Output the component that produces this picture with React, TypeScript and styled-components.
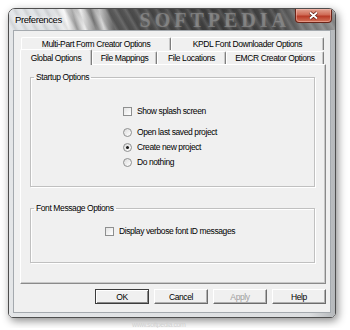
import styled, { createGlobalStyle } from 'styled-components';

const GlobalStyle = createGlobalStyle`
	html, body {
		margin: 0;
		background: #fff;
	}
	body {
		font-family: "Liberation Sans", Arial, sans-serif;
		letter-spacing: -0.4px;
		color: #000;
	}
`;

const Stage = styled.div`
	display: flex;
	flex-direction: column;
	align-items: flex-start;
	padding: 8px 0 0 8px;
`;

const Window = styled.div`
	width: 328px;
	height: 310px;
	box-sizing: border-box;
	display: flex;
	flex-direction: column;
	border: 1px solid #4e4e4e;
	border-radius: 7px 7px 5px 5px;
	overflow: hidden;
	box-shadow: 2px 3px 8px rgba(0, 0, 0, 0.45);
`;

const TitleBar = styled.div`
	height: 21px;
	flex: none;
	display: flex;
	align-items: flex-start;
	padding-left: 6px;
	background:
		repeating-linear-gradient(
			60deg,
			rgba(255, 255, 255, 0) 0px,
			rgba(255, 255, 255, 0.12) 3px,
			rgba(0, 0, 0, 0.08) 6px,
			rgba(255, 255, 255, 0) 9px
		),
		linear-gradient(
			75deg,
			#e3e6e9 0px,
			#dcdfe2 48px,
			#f6f6f6 58px,
			#a4a4a4 66px,
			#eeeeee 74px,
			#7c7c7c 84px,
			#d2d2d2 92px,
			#5a5a5a 102px,
			#4a4a4a 130px,
			#3c3c3c 200px,
			#474747 262px,
			#767676 286px,
			#8e8e8e 318px,
			#9c9c9c 330px
		);
`;

const Title = styled.span`
	font-size: 9.5px;
	line-height: 21px;
	text-shadow: 0 0 5px #fff, 0 0 3px #fff;
`;

const Watermark = styled.span`
	margin-left: auto;
	font-family: "Liberation Serif", serif;
	font-weight: bold;
	font-size: 20px;
	line-height: 22px;
	letter-spacing: 4px;
	color: rgba(150, 150, 150, 0.6);
	text-shadow: 0 0 3px rgba(200, 200, 200, 0.35);
`;

const CloseButton = styled.div`
	width: 37px;
	height: 14px;
	box-sizing: border-box;
	margin: 0 3px 0 5px;
	display: flex;
	align-items: center;
	justify-content: center;
	border: 1px solid #6a2418;
	border-top: none;
	border-radius: 0 0 4px 4px;
	background: linear-gradient(#e2a493 0%, #cf6a55 45%, #b83a26 55%, #d2745a 100%);
	box-shadow: inset 0 0 0 1px rgba(255, 200, 190, 0.45);
`;

const FrameBody = styled.div`
	flex: 1;
	display: flex;
	padding: 0 4px 4px 4px;
	background: linear-gradient(90deg, #e4e6e8 0%, #dcdee0 92%, #b4b7ba 100%);
`;

const Client = styled.div`
	flex: 1;
	display: flex;
	flex-direction: column;
	border: 1px solid #a4a9ae;
	background: #f0f0f0;
	padding: 6px 4px 8px 6px;
`;

const TabRow = styled.div<{ $inset: number; $height: number }>`
	display: flex;
	align-items: flex-end;
	height: ${(p) => p.$height}px;
	margin-left: ${(p) => p.$inset}px;
`;

const Tab = styled.div<{ $w: number; $selected?: boolean }>`
	width: ${(p) => p.$w}px;
	height: ${(p) => (p.$selected ? 16 : 13)}px;
	margin-bottom: ${(p) => (p.$selected ? -1 : 0)}px;
	position: ${(p) => (p.$selected ? 'relative' : 'static')};
	z-index: ${(p) => (p.$selected ? 1 : 0)};
	box-sizing: border-box;
	display: flex;
	align-items: center;
	justify-content: center;
	font-size: 8.5px;
	white-space: nowrap;
	background: #f0f0f0;
	border-top: 1px solid #fff;
	border-left: 1px solid #fff;
	border-right: 1px solid #7e7e7e;
	border-radius: 2px 2px 0 0;
	box-shadow: inset -1px 0 0 #c8c8c8;
`;

const Panel = styled.div`
	flex: 1;
	display: flex;
	flex-direction: column;
	gap: 16px;
	padding: 7px 10px 0 9px;
	border: 1px solid;
	border-color: #fff #8a8a8a #8a8a8a #fff;
	box-shadow: inset -1px -1px 0 #c8c8c8;
`;

const GroupBox = styled.fieldset<{ $padTop: number; $padBottom: number }>`
	margin: 0;
	min-width: 0;
	padding: ${(p) => p.$padTop}px 0 ${(p) => p.$padBottom}px 0;
	border: 1px solid #c0c0c0;
	box-shadow: inset 1px 1px 0 #fff, 1px 1px 0 #fff;
	display: flex;
	justify-content: center;
`;

const GroupLabel = styled.legend`
	margin-left: 3px;
	padding: 0 2px;
	font-size: 8.5px;
	line-height: 10px;
`;

const Options = styled.div`
	display: flex;
	flex-direction: column;
	align-items: flex-start;
	gap: 3px;
	margin-right: 5px;
`;

const OptionRow = styled.label<{ $spaceAfter?: number }>`
	display: flex;
	align-items: center;
	gap: 5px;
	height: 12px;
	font-size: 8.5px;
	margin-bottom: ${(p) => p.$spaceAfter ?? 0}px;
`;

const CheckBox = styled.span`
	width: 9px;
	height: 9px;
	box-sizing: border-box;
	border: 1px solid #8e8f8f;
	background: linear-gradient(135deg, #e4e4e4, #fff);
`;

const Radio = styled.span<{ $checked?: boolean }>`
	width: 9px;
	height: 9px;
	box-sizing: border-box;
	border-radius: 50%;
	border: 1px solid #8e8f8f;
	background: linear-gradient(135deg, #dcdcdc, #fff);
	display: flex;
	align-items: center;
	justify-content: center;
	&::after {
		content: '';
		width: 3px;
		height: 3px;
		border-radius: 50%;
		background: ${(p) => (p.$checked ? '#1a1a1a' : 'transparent')};
	}
`;

const ButtonBar = styled.div`
	display: flex;
	justify-content: flex-end;
	gap: 5px;
	margin-top: 5px;
`;

const Button = styled.button<{ $default?: boolean }>`
	width: 54px;
	height: 15px;
	padding: 0;
	box-sizing: border-box;
	font-family: inherit;
	letter-spacing: inherit;
	font-size: 8.5px;
	color: ${(p) => (p.disabled ? '#a0a0a0' : '#000')};
	background: #f0f0f0;
	border: 1px solid;
	border-color: ${(p) => (p.$default ? '#3c3c3c' : '#fff #6c6c6c #6c6c6c #fff')};
	box-shadow: ${(p) =>
		p.$default ? 'inset 1px 1px 0 #fff, inset -1px -1px 0 #8a8a8a' : 'inset -1px -1px 0 #b0b0b0'};
`;

const SiteMark = styled.span`
	margin: 3px 0 0 124px;
	font-size: 7px;
	color: #d0d0d0;
`;

function App() {
	return (
		<Stage>
			<GlobalStyle />
			<Window>
				<TitleBar>
					<Title>Preferences</Title>
					<Watermark>SOFTPEDIA</Watermark>
					<CloseButton title="Close">
						<svg width="11" height="9" viewBox="0 0 11 9">
							<path d="M2 1.5 L9 7.5 M9 1.5 L2 7.5" stroke="#5a1a10" strokeWidth="3.2" />
							<path d="M2 1.5 L9 7.5 M9 1.5 L2 7.5" stroke="#fff" strokeWidth="1.8" />
						</svg>
					</CloseButton>
				</TitleBar>
				<FrameBody>
					<Client>
						<TabRow $inset={1} $height={13}>
							<Tab $w={150}>Multi-Part Form Creator Options</Tab>
							<Tab $w={153}>KPDL Font Downloader Options</Tab>
						</TabRow>
						<TabRow $inset={0} $height={14}>
							<Tab $w={72} $selected>
								Global Options
							</Tab>
							<Tab $w={65}>File Mappings</Tab>
							<Tab $w={69}>File Locations</Tab>
							<Tab $w={98}>EMCR Creator Options</Tab>
						</TabRow>
						<Panel>
							<GroupBox $padTop={23} $padBottom={18}>
								<GroupLabel>Startup Options</GroupLabel>
								<Options>
									<OptionRow $spaceAfter={6}>
										<CheckBox />
										Show splash screen
									</OptionRow>
									<OptionRow>
										<Radio />
										Open last saved project
									</OptionRow>
									<OptionRow>
										<Radio $checked />
										Create new project
									</OptionRow>
									<OptionRow>
										<Radio />
										Do nothing
									</OptionRow>
								</Options>
							</GroupBox>
							<GroupBox $padTop={12} $padBottom={25}>
								<GroupLabel>Font Message Options</GroupLabel>
								<Options>
									<OptionRow>
										<CheckBox />
										Display verbose font ID messages
									</OptionRow>
								</Options>
							</GroupBox>
						</Panel>
						<ButtonBar>
							<Button $default>OK</Button>
							<Button>Cancel</Button>
							<Button disabled>Apply</Button>
							<Button>Help</Button>
						</ButtonBar>
					</Client>
				</FrameBody>
			</Window>
			<SiteMark>www.softpedia.com</SiteMark>
		</Stage>
	);
}

export default App;
